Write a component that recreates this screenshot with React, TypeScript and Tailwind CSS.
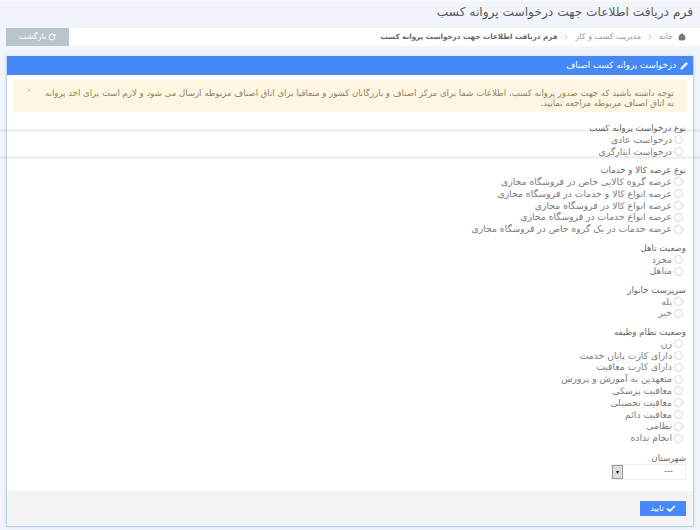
import { Check, ChevronRight, Home, Pencil, RotateCw, X } from 'lucide-react';

const groups = [
  { title: 'نوع درخواست پروانه کسب', items: ['درخواست عادی', 'درخواست ایثارگری'] },
  {
    title: 'نوع عرضه کالا و خدمات',
    items: [
      'عرضه گروه کالایی خاص در فروشگاه مجازی',
      'عرضه انواع کالا و خدمات در فروشگاه مجازی',
      'عرضه انواع کالا در فروشگاه مجازی',
      'عرضه انواع خدمات در فروشگاه مجازی',
      'عرضه خدمات در یک گروه خاص در فروشگاه مجازی',
    ],
  },
  { title: 'وضعیت تاهل', items: ['مجرد', 'متاهل'] },
  { title: 'سرپرست خانوار', items: ['بله', 'خیر'] },
  {
    title: 'وضعیت نظام وظیفه',
    items: [
      'زن',
      'دارای کارت پایان خدمت',
      'دارای کارت معافیت',
      'متعهدین به آموزش و پرورش',
      'معافیت پزشکی',
      'معافیت تحصیلی',
      'معافیت دائم',
      'نظامی',
      'انجام نداده',
    ],
  },
];

function RadioGroup({ title, items }: { title: string; items: string[] }) {
  return (
    <div className="mb-[6.5px]">
      <div className="h-[12px] text-[8.6px] leading-[12px] text-[#666]">{title}</div>
      {items.map((item) => (
        <div key={item} className="flex h-[11.8px] items-center gap-[2px] pr-[3px] text-[9.25px] text-[#7a7a7a]">
          <span className="h-[9px] w-[9px] shrink-0 rounded-full border border-[#d3d7de] bg-white" />
          <span>{item}</span>
        </div>
      ))}
    </div>
  );
}

export default function App() {
  return (
    <div dir="rtl" className="relative flex h-[530px] w-[700px] flex-col overflow-hidden bg-[#f1f4fb] font-['DejaVu_Sans',sans-serif]">
      <h1 className="h-[28px] border-t-[2px] border-[#f9fafd] pr-[7px] pt-[1px] text-[12.2px] leading-[18px] text-[#5a5a5a]">
        فرم دریافت اطلاعات جهت درخواست پروانه کسب
      </h1>

      <div className="flex h-[18px] items-stretch pl-[6px]">
        <div className="flex flex-1 items-center gap-[5px] bg-white pr-[14px] text-[8px] text-[#999]">
          <Home className="h-2 w-2 fill-[#777] text-[#777]" />
          <span>خانه</span>
          <ChevronRight className="h-2 w-2 text-[#aaa]" />
          <span>مدیریت کسب و کار</span>
          <ChevronRight className="h-2 w-2 text-[#aaa]" />
          <span className="text-[7.2px] font-bold text-[#666]">فرم دریافت اطلاعات جهت درخواست پروانه کسب</span>
        </div>
        <button type="button" className="flex w-[63px] items-center justify-center gap-0.5 bg-[#b9c4cd] text-[8px] text-white">
          <RotateCw className="h-2 w-2" strokeWidth={3} />
          بازگشت
        </button>
      </div>

      <section className="mx-[6px] mt-[10px] flex h-[471px] flex-col border-x border-b border-[#bdd0ef] bg-white shadow-[0_0_3px_#cfe0f7]">
        <div className="flex h-[19px] shrink-0 items-center gap-1 bg-[#4689f6] pr-[5px] text-[8.7px] text-white">
          <Pencil className="h-2 w-2 fill-white" />
          درخواست پروانه کسب اصناف
        </div>

        <div className="relative mx-[6px] mt-[5px] h-[32px] shrink-0 bg-[#fdf6e3] pl-[23px] pr-[13px] pt-[8px] text-[8.55px] leading-[10px] text-[#94805a]">
          توجه داشته باشید که جهت صدور پروانه کسب، اطلاعات شما برای مرکز اصناف و بازرگانان کشور و متعاقبا برای اتاق اصناف مربوطه ارسال می شود و لازم است برای اخذ پروانه به اتاق اصناف مربوطه مراجعه نمایید.
          <X className="absolute left-[13px] top-[7px] h-[6px] w-[6px] text-[#bbb]" />
        </div>

        <div className="flex-1 px-[7px] pt-[10px]">
          {groups.map((group) => (
            <RadioGroup key={group.title} title={group.title} items={group.items} />
          ))}
          <div className="mt-[8px] h-[12px] text-[8.6px] leading-[12px] text-[#666]">شهرستان</div>
          <div className="flex h-[16px] w-[75px] items-center justify-between border border-[#eeeeee] bg-white pr-[12px] text-[8px] text-[#666]">
            <span>---</span>
            <span className="flex h-[14px] w-[11px] items-center justify-center border border-[#999] bg-[#dddddd] text-[6px] text-black">▾</span>
          </div>
        </div>

        <div className="flex h-[35px] shrink-0 items-center bg-[#f4f4f4] pr-[7px]">
          <button type="button" className="flex h-[15px] w-[46px] items-center justify-center gap-0.5 bg-[#4689f6] text-[8px] text-white">
            <Check className="h-2.5 w-2.5" strokeWidth={4} />
            تایید
          </button>
        </div>
      </section>

      <div className="absolute inset-x-0 top-[128px] h-[5px] bg-linear-to-b from-black/0 via-black/[0.06] to-black/0" />
      <div className="absolute inset-x-0 top-[155px] h-[5px] bg-linear-to-b from-black/0 via-black/[0.07] to-black/0" />
    </div>
  );
}
